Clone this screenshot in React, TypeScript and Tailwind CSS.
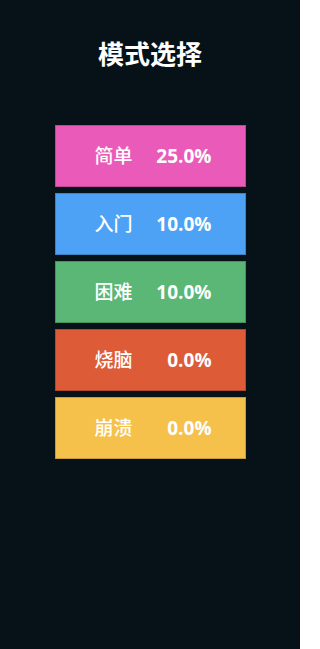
const modes = [
  { name: "简单", rate: "25.0%", color: "bg-[#ea5bb9]" },
  { name: "入门", rate: "10.0%", color: "bg-[#4ea2f6]" },
  { name: "困难", rate: "10.0%", color: "bg-[#5bb775]" },
  { name: "烧脑", rate: "0.0%", color: "bg-[#dd5c37]" },
  { name: "崩溃", rate: "0.0%", color: "bg-[#f6c14a]" },
];

export default function App() {
  return (
    <div
      className="w-[300px] h-[649px] bg-[#061218] flex flex-col items-center text-white"
      style={{ fontFamily: '"Open Sans", "Noto Sans CJK SC", sans-serif' }}
    >
      <h1 className="mt-[36px] text-[26px] leading-[36px] font-bold">模式选择</h1>

      <div className="mt-[53px] flex flex-col gap-[6px]">
        {modes.map((m) => (
          <button
            key={m.name}
            className={`w-[191px] h-[62px] ${m.color} border border-black/20 flex items-center justify-between pl-[39px] pr-[33px] text-[19px]`}
          >
            <span className="font-medium">{m.name}</span>
            <span className="font-bold">{m.rate}</span>
          </button>
        ))}
      </div>
    </div>
  );
}
